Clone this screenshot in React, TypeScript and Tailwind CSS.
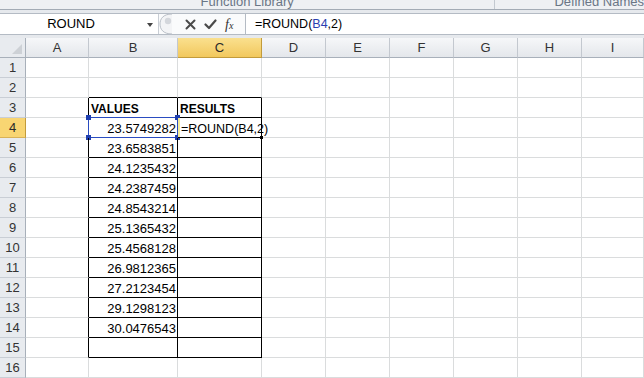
import type { ReactNode } from 'react'

const COLS = ['A', 'B', 'C', 'D', 'E', 'F', 'G', 'H', 'I']

const VALUES: Record<number, string> = {
  4: '23.5749282',
  5: '23.6583851',
  6: '24.1235432',
  7: '24.2387459',
  8: '24.8543214',
  9: '25.1365432',
  10: '25.4568128',
  11: '26.9812365',
  12: '27.2123454',
  13: '29.1298123',
  14: '30.0476543',
}

const font = { fontFamily: '"Liberation Sans", Arial, sans-serif' }

function inTable(row: number, col: number) {
  return (col === 1 || col === 2) && row >= 3 && row <= 15
}

function Cell({ row, col, children }: { row: number; col: number; children?: ReactNode }) {
  // right border is black on the table box and on column A beside it
  const rightBlack = inTable(row, col) || (col === 0 && row >= 3 && row <= 15)
  // bottom border black for table cells and the row right above it
  const bottomBlack = (col === 1 || col === 2) && row >= 2 && row <= 15
  return (
    <div
      className={`relative h-[20px] border-r border-b ${rightBlack ? 'border-r-black' : 'border-r-[#dadcdd]'} ${
        bottomBlack ? 'border-b-black' : 'border-b-[#dadcdd]'
      }`}
    >
      {children}
    </div>
  )
}

function RangeSquare({ pos }: { pos: string }) {
  return <span className={`absolute h-[5px] w-[5px] bg-[#1f3fb0] ${pos}`} />
}

function GridRow({ row }: { row: number }) {
  const active = row === 4
  return (
    <>
      <div
        className={`flex h-[20px] items-center justify-center border-r border-b text-[13px] ${
          active
            ? 'border-r-[#c29b3b] border-b-[#d8b258] bg-[#f8d572] text-[#2a2a2a]'
            : 'border-r-[#a8b0ba] border-b-[#c9ced5] bg-[#e8ebef] text-[#333]'
        }`}
      >
        {row}
      </div>
      {COLS.map((_, col) => {
        let content: ReactNode = null
        if (row === 3 && col === 1)
          content = <span className="absolute bottom-[2px] left-[2px] text-[12px] leading-none font-bold text-black">VALUES</span>
        if (row === 3 && col === 2)
          content = <span className="absolute bottom-[2px] left-[2px] text-[12px] leading-none font-bold text-black">RESULTS</span>
        if (col === 1 && VALUES[row])
          content = <span className="absolute right-[1px] bottom-[2px] text-[13px] leading-none text-black">{VALUES[row]}</span>
        if (row === 4 && col === 1)
          content = (
            <>
              <span className="absolute right-[1px] bottom-[2px] text-[13px] leading-none text-black">{VALUES[row]}</span>
              <span className="absolute -top-[1px] -left-[1px] h-[21px] w-[90px] border border-[#2a4cc0]" />
              <RangeSquare pos="-top-[3px] -left-[3px]" />
              <RangeSquare pos="-bottom-[3px] -left-[3px]" />
              <RangeSquare pos="-top-[3px] -right-[3px]" />
              <RangeSquare pos="-bottom-[3px] -right-[3px]" />
            </>
          )
        if (row === 4 && col === 2)
          content = (
            <>
              <span className="absolute top-0 bottom-0 left-0 w-[2px] bg-[#f4eb9c]" />
              <span className="absolute bottom-[2px] left-[3px] z-10 text-[12.5px] leading-none whitespace-nowrap text-black">
                =ROUND(B4,2)
              </span>
              <span className="absolute -right-[2px] -bottom-[2px] z-10 h-[3px] w-[3px] bg-black" />
            </>
          )
        return (
          <Cell key={col} row={row} col={col}>
            {content}
          </Cell>
        )
      })}
    </>
  )
}

function XIcon() {
  return (
    <svg width="11" height="11" viewBox="0 0 11 11">
      <path d="M1.5 1.5 L9.5 9.5 M9.5 1.5 L1.5 9.5" stroke="#4a4a4a" strokeWidth="2" strokeLinecap="round" />
    </svg>
  )
}

function CheckIcon() {
  return (
    <svg width="13" height="11" viewBox="0 0 13 11">
      <path d="M1.5 5.5 L5 9 L11.5 1.5" stroke="#4a4a4a" strokeWidth="2.2" fill="none" strokeLinecap="round" strokeLinejoin="round" />
    </svg>
  )
}

function Grabber() {
  return (
    <svg width="14" height="22" viewBox="0 0 14 22">
      <path d="M13 1 C4 1 1 6 1 11 C1 16 4 21 13 21" stroke="#b9bfc7" fill="#f3f4f6" strokeWidth="1" />
      <circle cx="9" cy="8" r="3.2" fill="#d4d7dc" />
    </svg>
  )
}

export default function App() {
  return (
    <div className="h-[378px] w-[644px] overflow-hidden bg-white" style={font}>
      {/* ribbon bottom edge, group labels cut off by the window top */}
      <div className="flex h-[10px] overflow-hidden border-b border-[#a3abb5] bg-[#eef0f3]">
        <div className="flex w-[517px] justify-center border-r border-[#c3c9d0]">
          <span className="-mt-[8px] text-[13px] text-[#6a7686]">Function Library</span>
        </div>
        <div className="flex flex-1 pl-[59px]">
          <span className="-mt-[8px] text-[13px] whitespace-nowrap text-[#6a7686]">Defined Names</span>
        </div>
      </div>

      {/* formula bar */}
      <div className="h-[28px] bg-[#e6e9ed] pt-[3px]">
        <div className="flex h-[22px] items-stretch border-y border-[#b4bbc4] bg-white">
          <div className="relative flex w-[159px] items-center justify-center border-r border-[#c9ced5]">
            <span className="-ml-[16px] text-[13px] text-black">ROUND</span>
            <span className="absolute top-[9px] right-[5px] h-0 w-0 border-x-[3.5px] border-t-[4px] border-x-transparent border-t-[#444]" />
          </div>
          <div className="flex w-[86px] items-center bg-[#fafbfc]">
            <Grabber />
            <div className="ml-[12px] flex items-center">
              <XIcon />
            </div>
            <div className="ml-[8px] flex items-center">
              <CheckIcon />
            </div>
            <span
              className="ml-[8px] text-[14px] text-[#333] italic"
              style={{ fontFamily: '"Liberation Serif", "Times New Roman", serif' }}
            >
              f<span className="text-[10px]">x</span>
            </span>
          </div>
          <div className="flex flex-1 items-center border-l border-[#b4bbc4] pl-[9px] text-[12.5px] text-black">
            =ROUND(<span className="text-[#2b3fb0]">B4</span>,2)
          </div>
        </div>
      </div>

      {/* sheet grid */}
      <div className="grid grid-cols-[26px_63px_89px_84px_64px_64px_64px_64px_64px_62px]">
        <div className="flex h-[20px] items-end justify-end border-r border-b border-r-[#a8b0ba] border-b-[#a8b0ba] bg-[#e8ebef] p-[3px]">
          <span className="h-0 w-0 border-t-[10px] border-r-[10px] border-b-0 border-l-[10px] border-t-transparent border-r-[#cdd1d6] border-l-transparent" />
        </div>
        {COLS.map((c) => (
          <div
            key={c}
            className={`flex h-[20px] items-center justify-center border-r border-b text-[13px] ${
              c === 'C'
                ? 'border-r-[#c29b3b] border-b-[#c29b3b] bg-gradient-to-b from-[#fae08e] to-[#f2c85c] text-[#2a2a2a]'
                : 'border-r-[#c3c8cf] border-b-[#a8b0ba] bg-gradient-to-b from-[#f6f7f9] to-[#e4e7eb] text-[#333]'
            }`}
          >
            {c}
          </div>
        ))}
        {Array.from({ length: 16 }, (_, i) => (
          <GridRow key={i} row={i + 1} />
        ))}
      </div>
    </div>
  )
}
